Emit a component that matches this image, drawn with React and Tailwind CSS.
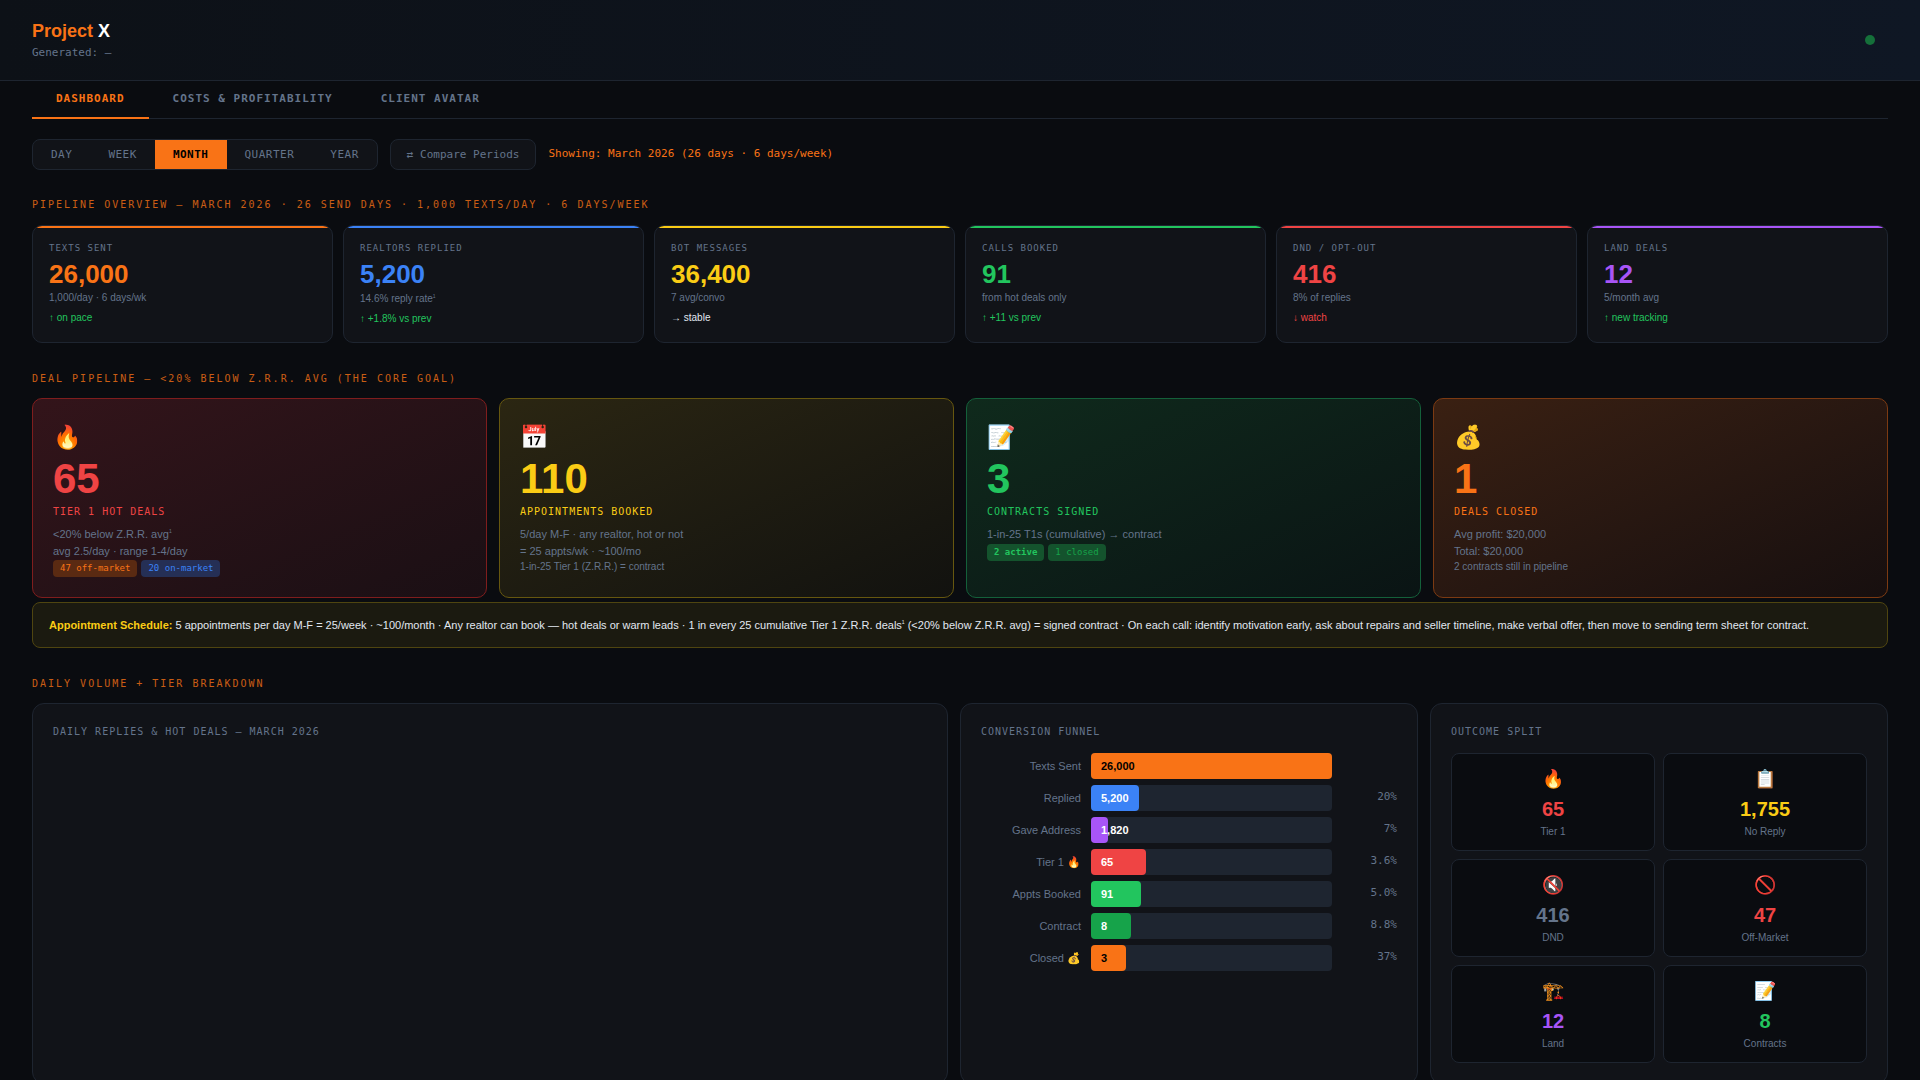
const MONO = "font-['DejaVu_Sans_Mono',monospace]";

const KPIS = [
  { label: 'TEXTS SENT', value: '26,000', sub: '1,000/day · 6 days/wk', delta: '↑ on pace', bar: 'bg-[#f97316]', text: 'text-[#f97316]', deltaColor: 'text-[#22c55e]' },
  { label: 'REALTORS REPLIED', value: '5,200', sub: '14.6% reply rate', sup: true, delta: '↑ +1.8% vs prev', bar: 'bg-[#3b82f6]', text: 'text-[#3b82f6]', deltaColor: 'text-[#22c55e]' },
  { label: 'BOT MESSAGES', value: '36,400', sub: '7 avg/convo', delta: '→ stable', bar: 'bg-[#facc15]', text: 'text-[#facc15]', deltaColor: 'text-[#e2e8f0]' },
  { label: 'CALLS BOOKED', value: '91', sub: 'from hot deals only', delta: '↑ +11 vs prev', bar: 'bg-[#22c55e]', text: 'text-[#22c55e]', deltaColor: 'text-[#22c55e]' },
  { label: 'DND / OPT-OUT', value: '416', sub: '8% of replies', delta: '↓ watch', bar: 'bg-[#ef4444]', text: 'text-[#ef4444]', deltaColor: 'text-[#ef4444]' },
  { label: 'LAND DEALS', value: '12', sub: '5/month avg', delta: '↑ new tracking', bar: 'bg-[#a855f7]', text: 'text-[#a855f7]', deltaColor: 'text-[#22c55e]' },
];

const FUNNEL = [
  { label: 'Texts Sent', value: '26,000', width: 100, pct: '', fill: 'bg-[#f97316]', ink: 'text-black' },
  { label: 'Replied', value: '5,200', width: 20, pct: '20%', fill: 'bg-[#3b82f6]', ink: 'text-white' },
  { label: 'Gave Address', value: '1,820', width: 7, pct: '7%', fill: 'bg-[#a855f7]', ink: 'text-white' },
  { label: 'Tier 1 🔥', value: '65', width: 22.8, pct: '3.6%', fill: 'bg-[#ef4444]', ink: 'text-white' },
  { label: 'Appts Booked', value: '91', width: 20.8, pct: '5.0%', fill: 'bg-[#22c55e]', ink: 'text-white' },
  { label: 'Contract', value: '8', width: 16.6, pct: '8.8%', fill: 'bg-[#16a34a]', ink: 'text-white' },
  { label: 'Closed 💰', value: '3', width: 14.5, pct: '37%', fill: 'bg-[#f97316]', ink: 'text-black' },
];

const OUTCOMES = [
  { icon: '🔥', value: '65', label: 'Tier 1', text: 'text-[#ef4444]' },
  { icon: '📋', value: '1,755', label: 'No Reply', text: 'text-[#facc15]' },
  { icon: '🔇', value: '416', label: 'DND', text: 'text-[#64748b]' },
  { icon: '🚫', value: '47', label: 'Off-Market', text: 'text-[#ef4444]' },
  { icon: '🏗️', value: '12', label: 'Land', text: 'text-[#a855f7]' },
  { icon: '📝', value: '8', label: 'Contracts', text: 'text-[#22c55e]' },
];

function Sup() {
  return <span className="align-super text-[5px] leading-none">1</span>;
}

function SectionTitle({ children, className }) {
  return (
    <div className={`${MONO} text-[10px] leading-[12px] tracking-[2px] text-[#f97316] opacity-80 ${className}`}>
      {children}
    </div>
  );
}

function Tag({ className, children }) {
  return <span className={`${MONO} inline-block rounded-[4px] px-[7px] text-[9px] leading-[17px] ${className}`}>{children}</span>;
}

function DealCard({ icon, value, label, tint, valueColor, children }) {
  return (
    <div className={`h-[200px] rounded-[10px] border p-5 ${tint}`}>
      <div className="text-[23px] leading-[36px]">{icon}</div>
      <div className={`mt-[2px] text-[42px] font-bold leading-[44px] ${valueColor}`}>{value}</div>
      <div className={`${MONO} mt-[3px] text-[10px] leading-[15px] tracking-[1px] ${valueColor}`}>{label}</div>
      <div className="mt-[7px] text-[11px] leading-[16.5px] text-[#64748b]">{children}</div>
    </div>
  );
}

export default function App() {
  return (
    <div className="min-h-screen bg-[#0a0c10] font-['Liberation_Sans',Arial,sans-serif] text-[#e2e8f0]">
      <header className="flex h-[81px] items-center justify-between border-b border-[#1e2530] bg-gradient-to-r from-[#0d1117] to-[#0f1724] px-8">
        <div>
          <div className="text-[18px] font-bold leading-[22px] text-[#f97316]">Project <span className="text-white">X</span></div>
          <div className={`${MONO} mt-[3px] text-[11px] leading-[16px] text-[#64748b]`}>Generated: —</div>
        </div>
        <div className="mr-[13px] h-[10px] w-[10px] rounded-full bg-[#15703a]" />
      </header>

      <main className="px-8">
        <nav className={`${MONO} flex border-b border-[#1e2530] text-[11px] font-bold leading-[16px] tracking-[1px] text-[#64748b]`}>
          <div className="-mb-px border-b-2 border-[#f97316] px-6 pb-[10px] pt-[10px] text-[#f97316]">DASHBOARD</div>
          <div className="px-6 pb-[10px] pt-[10px]">COSTS &amp; PROFITABILITY</div>
          <div className="px-6 pb-[10px] pt-[10px]">CLIENT AVATAR</div>
        </nav>

        <div className={`${MONO} mt-[20px] flex items-center gap-3 text-[11px] leading-[16px]`}>
          <div className="flex h-[31px] overflow-hidden rounded-[8px] border border-[#1e2530] bg-[#111318] tracking-[0.5px] text-[#64748b]">
            <div className="px-[18px] py-[7px]">DAY</div>
            <div className="px-[18px] py-[7px]">WEEK</div>
            <div className="bg-[#f97316] px-[18px] py-[7px] font-bold text-black">MONTH</div>
            <div className="px-[18px] py-[7px]">QUARTER</div>
            <div className="px-[18px] py-[7px]">YEAR</div>
          </div>
          <div className="flex h-[31px] items-center rounded-[8px] border border-[#1e2530] bg-[#111318] px-[16px] text-[#64748b]">⇄ Compare Periods</div>
          <div className="-mt-[2px] text-[#f97316]">Showing: March 2026 (26 days · 6 days/week)</div>
        </div>

        <SectionTitle className="mt-[29px]">PIPELINE OVERVIEW — MARCH 2026 · 26 SEND DAYS · 1,000 TEXTS/DAY · 6 DAYS/WEEK</SectionTitle>

        <div className="mt-[14px] grid grid-cols-6 gap-[10px]">
          {KPIS.map((k) => (
            <div key={k.label} className="relative h-[118px] overflow-hidden rounded-[10px] border border-[#1e2530] bg-[#111318] px-4 pt-[15px]">
              <div className={`absolute inset-x-0 top-0 h-[2px] ${k.bar}`} />
              <div className={`${MONO} text-[9px] leading-[14px] tracking-[1px] text-[#64748b]`}>{k.label}</div>
              <div className={`mt-[2px] text-[26px] font-bold leading-[34px] ${k.text}`}>{k.value}</div>
              <div className={`-mt-[1px] text-[10px] leading-[15px] text-[#64748b] ${k.sup ? 'pt-px' : ''}`}>{k.sub}{k.sup && <Sup />}</div>
              <div className={`mt-[5px] text-[10px] leading-[15px] ${k.deltaColor}`}>{k.delta}</div>
            </div>
          ))}
        </div>

        <SectionTitle className="mt-[30px]">DEAL PIPELINE — &lt;20% BELOW Z.R.R. AVG (THE CORE GOAL)</SectionTitle>

        <div className="mt-[13px] grid grid-cols-4 gap-3">
          <DealCard icon="🔥" value="65" label="TIER 1 HOT DEALS" valueColor="text-[#ef4444]" tint="border-[#7f1d1d] bg-gradient-to-br from-[#33141a] to-[#1a0f14]">
            <div>&lt;20% below Z.R.R. avg<Sup /></div>
            <div>avg 2.5/day · range 1-4/day</div>
            <div className="mt-[1px] flex gap-1">
              <Tag className="bg-[#5a2a12] text-[#f97316]">47 off-market</Tag>
              <Tag className="bg-[#252f55] text-[#3b82f6]">20 on-market</Tag>
            </div>
          </DealCard>
          <DealCard icon="📅" value="110" label="APPOINTMENTS BOOKED" valueColor="text-[#facc15]" tint="border-[#66570f] bg-gradient-to-br from-[#2b2612] to-[#12120f]">
            <div>5/day M-F · any realtor, hot or not</div>
            <div>= 25 appts/wk · ~100/mo</div>
            <div className="text-[10px]">1-in-25 Tier 1 (Z.R.R.) = contract</div>
          </DealCard>
          <DealCard icon="📝" value="3" label="CONTRACTS SIGNED" valueColor="text-[#22c55e]" tint="border-[#14603a] bg-gradient-to-br from-[#0f2a1c] to-[#0a1414]">
            <div>1-in-25 T1s (cumulative) → contract</div>
            <div className="mt-[1px] flex gap-1">
              <Tag className="bg-[#14532d] font-bold text-[#22c55e]">2 active</Tag>
              <Tag className="bg-[#14532d] text-[#16a34a]">1 closed</Tag>
            </div>
          </DealCard>
          <DealCard icon="💰" value="1" label="DEALS CLOSED" valueColor="text-[#f97316]" tint="border-[#7c3a12] bg-gradient-to-br from-[#3a2012] to-[#170f0f]">
            <div>Avg profit: $20,000</div>
            <div>Total: $20,000</div>
            <div className="text-[10px]">2 contracts still in pipeline</div>
          </DealCard>
        </div>

        <div className="mt-[4px] flex h-[46px] items-center rounded-[8px] border border-[#4f4510] bg-[#1b1a10] px-4 text-[11px] leading-[16px] text-[#e2e8f0]">
          <div>
            <b className="text-[#facc15]">Appointment Schedule:</b> 5 appointments per day M-F = 25/week · ~100/month · Any realtor can book — hot deals or warm leads · 1 in every 25 cumulative Tier 1 Z.R.R. deals<Sup /> (&lt;20% below Z.R.R. avg) = signed contract · On each call: identify motivation early, ask about repairs and seller timeline, make verbal offer, then move to sending term sheet for contract.
          </div>
        </div>

        <SectionTitle className="mt-[30px]">DAILY VOLUME + TIER BREAKDOWN</SectionTitle>

        <div className="mt-[13px] grid grid-cols-[2fr_1fr_1fr] gap-3 pb-6">
          <div className="rounded-[12px] border border-[#1e2530] bg-[#111318] p-5">
            <div className={`${MONO} text-[10px] leading-[15px] tracking-[1px] text-[#64748b]`}>DAILY REPLIES &amp; HOT DEALS — MARCH 2026</div>
          </div>

          <div className="rounded-[12px] border border-[#1e2530] bg-[#111318] p-5">
            <div className={`${MONO} text-[10px] leading-[15px] tracking-[1px] text-[#64748b]`}>CONVERSION FUNNEL</div>
            <div className="mt-[14px] flex flex-col gap-[6px]">
              {FUNNEL.map((f) => (
                <div key={f.label} className="flex h-[26px] items-center">
                  <div className="w-[100px] shrink-0 text-right text-[11px] text-[#64748b]">{f.label}</div>
                  <div className="relative ml-[10px] h-[26px] w-[241px] shrink-0 rounded-[4px] bg-[#1e2530]">
                    <div className={`h-full rounded-[4px] ${f.fill}`} style={{ width: `${f.width}%` }} />
                    <div className={`absolute inset-y-0 left-[10px] flex items-center text-[11px] font-bold ${f.ink}`}>{f.value}</div>
                  </div>
                  <div className={`${MONO} flex-1 -mt-[1px] text-right text-[11px] text-[#64748b]`}>{f.pct}</div>
                </div>
              ))}
            </div>
          </div>

          <div className="rounded-[12px] border border-[#1e2530] bg-[#111318] p-5">
            <div className={`${MONO} text-[10px] leading-[15px] tracking-[1px] text-[#64748b]`}>OUTCOME SPLIT</div>
            <div className="mt-[14px] grid grid-cols-2 gap-2">
              {OUTCOMES.map((o) => (
                <div key={o.label} className="h-[98px] rounded-[8px] border border-[#1e2530] bg-[#0a0c10] pt-[12px] text-center">
                  <div className="text-[18px] leading-[27px]">{o.icon}</div>
                  <div className={`mt-[1px] text-[20px] font-bold leading-[30px] ${o.text}`}>{o.value}</div>
                  <div className="text-[10px] leading-[15px] text-[#64748b]">{o.label}</div>
                </div>
              ))}
            </div>
          </div>
        </div>
      </main>
    </div>
  );
}
